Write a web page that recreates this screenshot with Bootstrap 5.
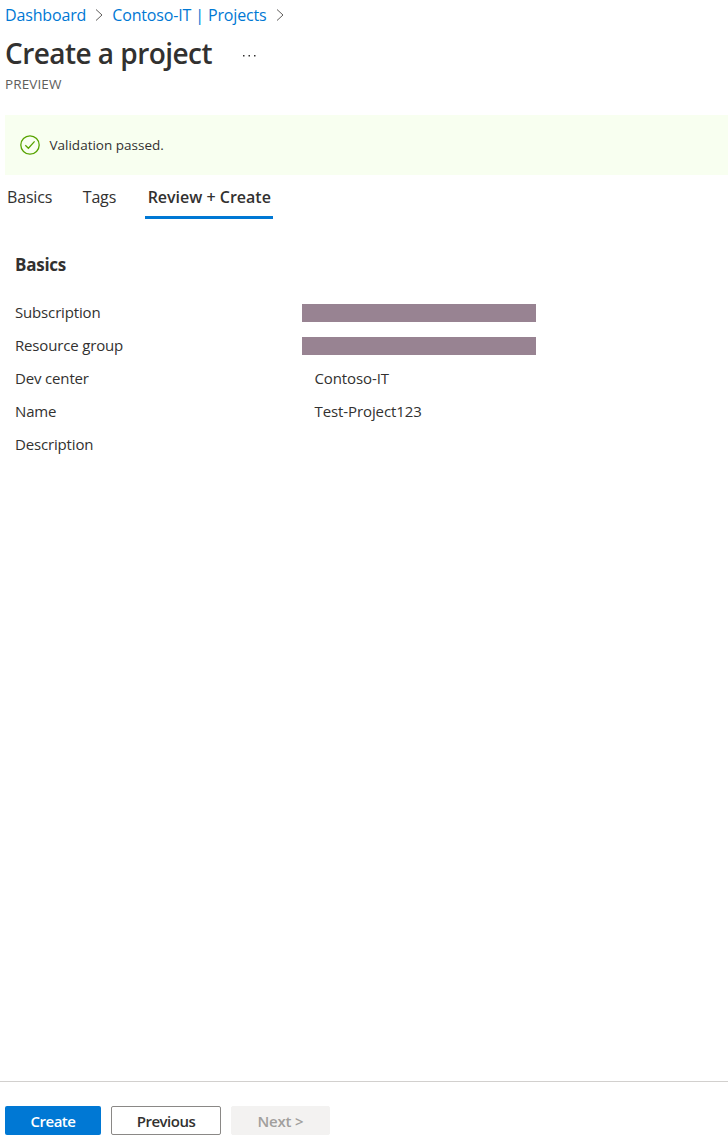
<!DOCTYPE html>
<html lang="en">
<head>
<meta charset="utf-8">
<meta name="viewport" content="width=device-width, initial-scale=1">
<title>Create a project</title>
<link href="https://cdn.jsdelivr.net/npm/bootstrap@5.3.0/dist/css/bootstrap.min.css" rel="stylesheet">
<style>
body{font-family:"Open Sans","Noto Sans",sans-serif;color:#323130;font-size:15px;line-height:20px;letter-spacing:-.16px;background:#fff}
.crumbs{height:30px;padding-left:5px;font-size:16px;letter-spacing:-.15px}
.crumbs a{color:#0078d4}
.page-title{font-size:28px;line-height:38px;font-weight:600;letter-spacing:-.55px;color:#323130}
.title-row{height:43px;margin-top:1px;padding-left:5px}
.preview{font-size:13.5px;line-height:20px;color:#605e5c;padding-left:5px;letter-spacing:.1px}
.notice{height:60px;margin:21px 0 0 5px;padding-left:15px;background:#f8fff0;font-size:13.5px;letter-spacing:0}
.notice span{margin-left:9.5px}
.steps{height:44px;font-size:16px;gap:28.5px;padding-left:7px}
.steps .nav-link{color:#323130;padding:0;height:44px;line-height:44px}
.steps .step-tags{margin-left:2px}
.steps .active{width:128px;font-weight:600;letter-spacing:0;border-bottom:3px solid #0078d4;padding:0 3px}
.summary{padding:34px 15px 0}
.section-title{font-size:17px;line-height:24px;font-weight:700;letter-spacing:-.25px;margin-bottom:18px}
.field{height:33px}
.field dt{width:299.5px;font-weight:400}
.field dd{letter-spacing:-.1px}
.redacted{width:234px;height:18px;margin:2px 0 0 -12.5px;background:#988392}
.actions{height:63px;gap:10px;border-top:1px solid #d2d0ce;padding:24px 0 0 5px}
.actions .btn{height:29px;padding:1px 0 0;border-radius:2px;font-size:15px;line-height:27px;font-weight:600;letter-spacing:-.5px}
.actions .btn-create{width:96px;background:#0078d4;color:#fff}
.actions .btn-prev{width:110px;border-color:#8a8886;color:#323130}
.actions .btn-next,.actions .btn-next:disabled{width:99px;background:#f3f2f1;color:#a19f9d;border-color:#f3f2f1;opacity:1;letter-spacing:-.2px}
</style>
</head>
<body>
<div class="d-flex flex-column vh-100 overflow-hidden">
<nav class="crumbs d-flex align-items-center" aria-label="Breadcrumb">
<a class="text-decoration-none" href="#">Dashboard</a>
<svg class="mx-2" width="10" height="14" fill="none" stroke="#605e5c"><path d="M2 1.5 8 7 2 12.5"/></svg>
<a class="text-decoration-none" href="#">Contoso-IT | Projects</a>
<svg class="mx-2" width="10" height="14" fill="none" stroke="#605e5c"><path d="M2 1.5 8 7 2 12.5"/></svg>
</nav>
<header>
<div class="title-row d-flex align-items-center">
<h1 class="page-title mb-0">Create a project</h1>
<svg class="ms-4" width="30" height="10" fill="#323130"><path d="M7 7h1.5v1.5H7zM12.5 7H14v1.5h-1.5zM18 7h1.5v1.5H18z"/></svg>
</div>
<div class="preview">PREVIEW</div>
</header>
<div class="notice d-flex align-items-center" role="status">
<svg width="20" height="20" fill="none" stroke="#57a300" stroke-width="1.3"><circle cx="10" cy="10" r="9.2"/><path d="M5.3 10.2 8.4 13.2 14.6 6.4"/></svg>
<span>Validation passed.</span>
</div>
<ul class="steps nav flex-nowrap">
<li><a class="nav-link" href="#">Basics</a></li>
<li class="step-tags"><a class="nav-link" href="#">Tags</a></li>
<li><a class="nav-link active text-nowrap" href="#">Review + Create</a></li>
</ul>
<main class="summary flex-grow-1">
<h2 class="section-title">Basics</h2>
<dl class="mb-0">
<div class="field d-flex align-items-center"><dt>Subscription</dt><dd class="redacted"></dd></div>
<div class="field d-flex align-items-center"><dt>Resource group</dt><dd class="redacted"></dd></div>
<div class="field d-flex align-items-center"><dt>Dev center</dt><dd class="mb-0">Contoso-IT</dd></div>
<div class="field d-flex align-items-center"><dt>Name</dt><dd class="mb-0">Test-Project123</dd></div>
<div class="field d-flex align-items-center"><dt>Description</dt><dd class="mb-0"></dd></div>
</dl>
</main>
<footer class="actions d-flex">
<button type="button" class="btn btn-create">Create</button>
<button type="button" class="btn btn-prev">Previous</button>
<button type="button" class="btn btn-next" disabled>Next &gt;</button>
</footer>
</div>
<script src="https://cdn.jsdelivr.net/npm/bootstrap@5.3.0/dist/js/bootstrap.bundle.min.js"></script>
</body>
</html>
